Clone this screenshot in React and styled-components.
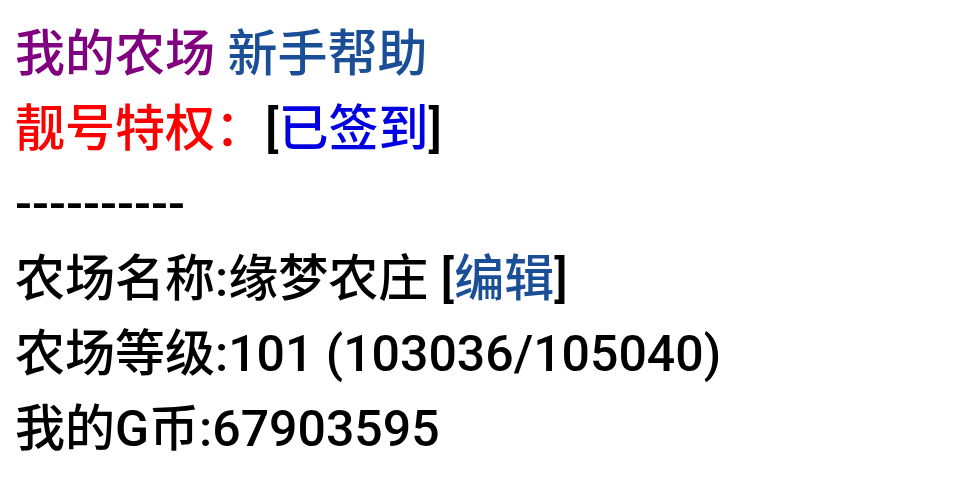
import React from "react";
import styled, { createGlobalStyle } from "styled-components";

const Global = createGlobalStyle`
  html, body { margin: 0; padding: 0; background: #fff; }
  body {
    font-family: Roboto, "Noto Sans CJK SC", sans-serif;
    font-size: 50px;
    font-weight: 500;
    line-height: 75px;
    color: #000;
  }
`;

const Page = styled.div`
  padding: 17px 15px 0 15px;
  display: flex;
  flex-direction: column;
`;

const Line = styled.div`
  white-space: nowrap;
  height: 75px;
`;

const Link = styled.a`
  color: ${(p) => p.$color || "#1a4f98"};
  text-decoration: none;
`;

const Red = styled.span`
  color: #f00;
`;

export default function App() {
  return (
    <>
      <Global />
      <Page>
        <Line>
          <Link $color="#800080">我的农场</Link> <Link>新手帮助</Link>
        </Line>
        <Line>
          <Red>靓号特权：</Red>[<Link $color="#0000e0">已签到</Link>]
        </Line>
        <Line>----------</Line>
        <Line>
          农场名称:缘梦农庄 [<Link>编辑</Link>]
        </Line>
        <Line>农场等级:101 (103036/105040)</Line>
        <Line>我的G币:67903595</Line>
      </Page>
    </>
  );
}
